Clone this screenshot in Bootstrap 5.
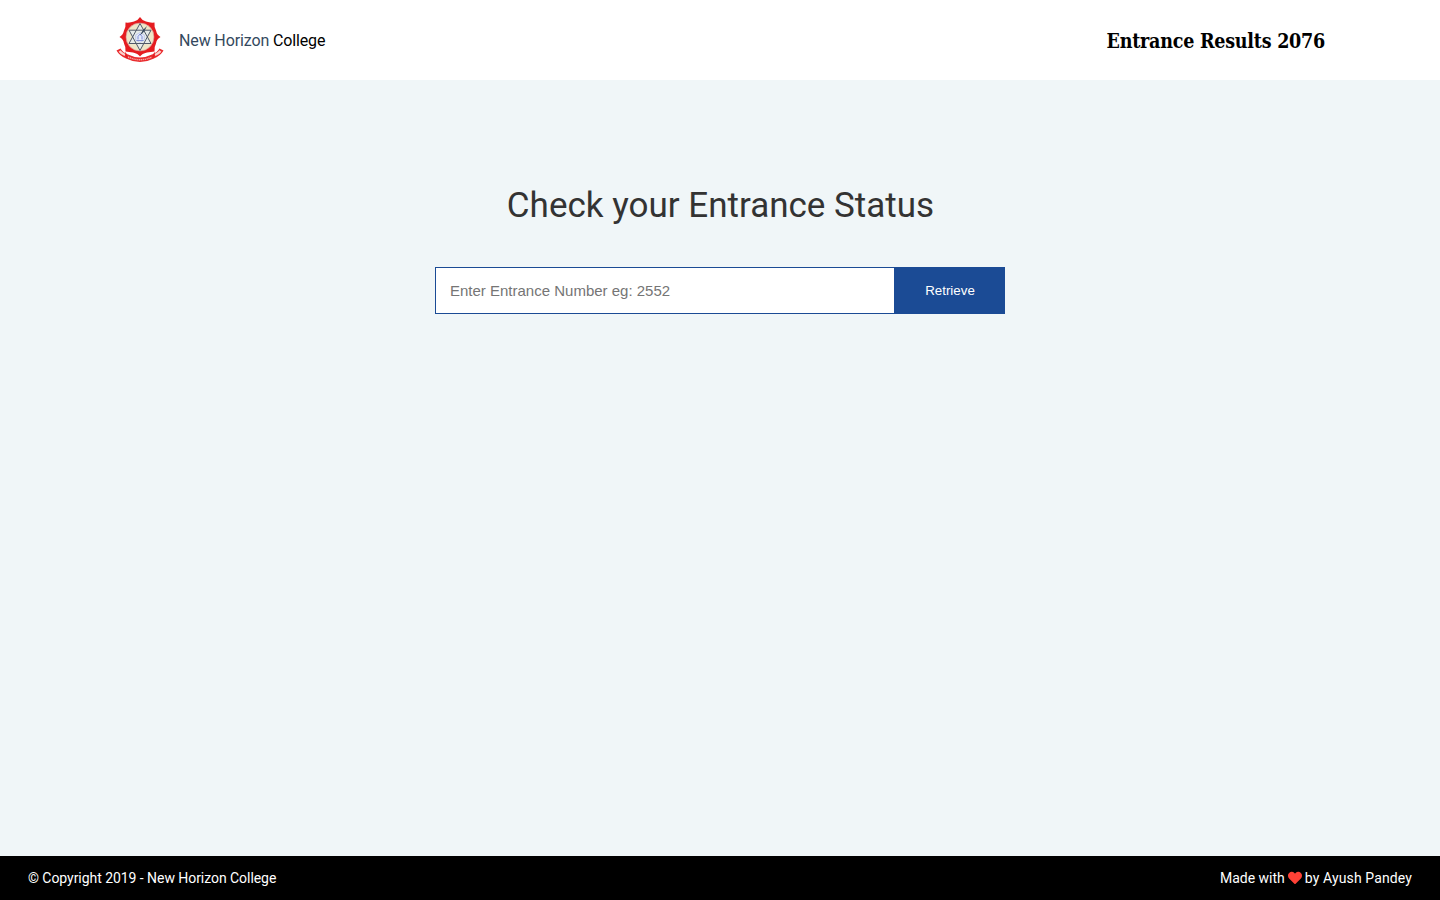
<!DOCTYPE html>
<html lang="en">
<head>
<meta charset="utf-8">
<meta name="viewport" content="width=device-width, initial-scale=1">
<title>Entrance Results 2076</title>
<link href="https://cdn.jsdelivr.net/npm/bootstrap@5.3.0/dist/css/bootstrap.min.css" rel="stylesheet">
<style>
  body { font-family: Roboto, sans-serif; background: #f0f6f8; color: #000; line-height: 1.2; }
  .site-header { height: 80px; padding: 0 115px; }
  .college-name { font-size: 16px; margin-left: 14px; padding-top: 2px; letter-spacing: -.13px; }
  .college-name span { color: #34495e; }
  .result-title { font: 700 19.5px/1.3 "Roboto Slab", "DejaVu Serif Condensed", "DejaVu Serif", serif; font-stretch: semi-condensed; letter-spacing: -.24px; white-space: nowrap; padding-top: 3px; }
  .page-title { font-size: 35px; font-weight: 400; color: #333; margin: 105px 0 40px; line-height: 42px; padding-left: 1px; }
  .search-form { width: 570px; height: 47px; border: 1px solid #1b4b95; }
  .search-form input { font: 15px "Liberation Sans", sans-serif; padding: 0 14px; outline: 0; }
  .search-form input::placeholder { color: #757575; }
  .search-form button { width: 111px; margin-right: -1px; padding: 0 0 0 1px; background: #1b4b95; color: #fff; font: 13.333px "Liberation Sans", sans-serif; }
  .site-footer { height: 44px; padding: 0 28px; font-size: 14px; }
  .copyright { letter-spacing: -.05px; }
  .credit svg { margin: 0 3px; }
  .author { letter-spacing: .12px; }
</style>
</head>
<body class="d-flex flex-column vh-100 overflow-hidden">
<header class="site-header bg-white d-flex align-items-center justify-content-between">
  <div class="d-flex align-items-center">
    <svg width="50" height="50" viewBox="5 5 50 50" role="img" aria-label="College crest">
      <path d="M30 7Q32 10.500 36 11.500Q40 13 44.500 12.500Q44 17 46 20.500Q47 25 50.500 27Q46.500 29 46 33.500Q44 37 44.500 41.500L37 42.500Q32 43.500 30 46.500Q28 43.500 23 42.500L15.500 41.500Q16 37 14 33.500Q13.500 29 9.500 27Q13 25 14 20.500Q16 17 15.500 12.500Q20 13 24 11.500Q28 10.500 30 7Z" fill="#e51c20"/>
      <circle cx="30" cy="27" r="14" fill="#eee6c8" stroke="#d9888a" stroke-width=".6"/>
      <path d="M30 13.500 41 33.500H19ZM30 40.500 19 20.200H41Z" fill="#e6ebe8" stroke="#50596a" stroke-width="1"/>
      <path d="M30 22.500 34.300 25v5L30 32.500 25.700 30v-5Z" fill="#e4eafa" stroke="#a5afe0" stroke-width=".5"/>
      <path d="M26.500 30.500h7M28 29.500v-3l2-2.500 2 2.500v3" fill="none" stroke="#6576cd" stroke-width=".8"/>
      <path d="M37 16Q34 23 30 25Q33 19 37 16Z" fill="#34465d"/>
      <path d="M8.500 39.500Q11 44 17 46.500Q30 53 43 46.500Q49 44 51.500 39.500" fill="none" stroke="#e92a2d" stroke-width="4.600"/>
      <path d="M9.500 41Q11.500 43.700 15 45M45 45Q48.500 43.700 50.500 41" fill="none" stroke="#fbd1cc" stroke-width="2.300"/>
      <path d="M18 47Q30 52.500 42 47" fill="none" stroke="#f5a5a1" stroke-width="1.400" stroke-dasharray="1.300 .6"/>
      <path d="M15.500 42.500 17 48M44.500 42.500 43 48" stroke="#e51c20" stroke-width="1"/>
    </svg>
    <div class="college-name"><span>New Horizon</span> College</div>
  </div>
  <div class="result-title">Entrance Results 2076</div>
</header>
<main class="flex-grow-1 d-flex flex-column align-items-center">
  <h1 class="page-title">Check your Entrance Status</h1>
  <form class="search-form d-flex bg-white">
    <input class="flex-grow-1 border-0 bg-transparent" type="text" placeholder="Enter Entrance Number eg: 2552" aria-label="Entrance number">
    <button class="border-0" type="button">Retrieve</button>
  </form>
</main>
<footer class="site-footer bg-black text-white d-flex align-items-center justify-content-between">
  <div class="copyright">© Copyright 2019 - New Horizon College</div>
  <div class="credit d-flex align-items-center"><span>Made with</span><svg width="14" height="14" viewBox="0 0 512 512" fill="#ff4136" aria-label="love"><path d="M462.300 62.600C407.500 15.900 326 24.300 275.700 76.200L256 96.500l-19.700-20.300C186.100 24.300 104.500 15.900 49.700 62.600c-62.800 53.600-66.100 149.800-9.900 207.900l193.500 199.800c12.500 12.900 32.800 12.900 45.300 0l193.500-199.800c56.300-58.100 53-154.300-9.800-207.900z"/></svg><span class="author">by Ayush Pandey</span></div>
</footer>
<script src="https://cdn.jsdelivr.net/npm/bootstrap@5.3.0/dist/js/bootstrap.bundle.min.js"></script>
</body>
</html>
